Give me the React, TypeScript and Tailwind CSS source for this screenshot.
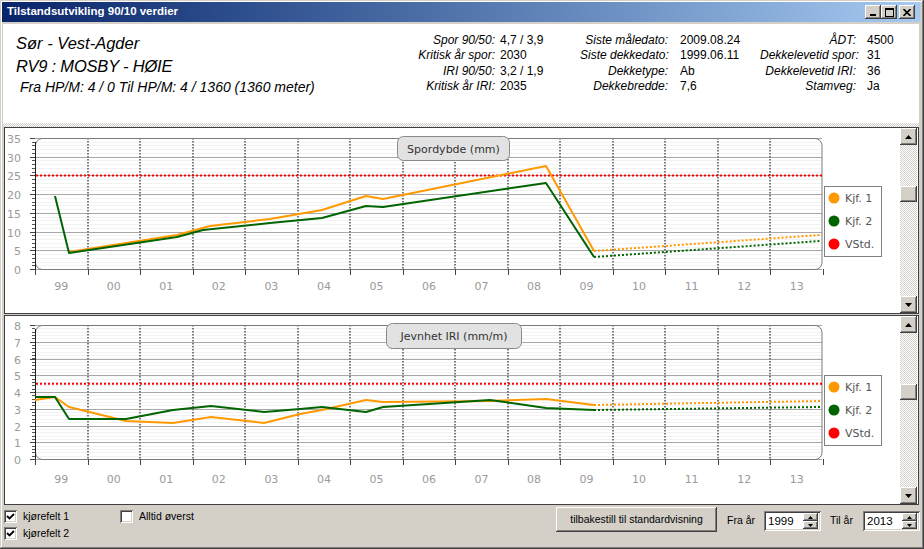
import React from "react";

type Pt = [number, number];

const bevel =
  "bg-[#d4d0c8] shadow-[inset_-1px_-1px_#404040,inset_1px_1px_#ffffff,inset_-2px_-2px_#808080,inset_2px_2px_#d4d0c8]";
const sunken =
  "bg-white shadow-[inset_1px_1px_#808080,inset_-1px_-1px_#ffffff,inset_2px_2px_#404040,inset_-2px_-2px_#d4d0c8]";
const hatch =
  "bg-[image:repeating-conic-gradient(#d4d0c8_0_25%,#ffffff_0_50%)] bg-[length:2px_2px]";

const ticks = Array.from({ length: 16 }, (_, k) => 35 + k * 52.53);
const years = ["99", "00", "01", "02", "03", "04", "05", "06", "07", "08", "09", "10", "11", "12", "13"];

const line = (p: Pt[]) => p.map(([x, y]) => `${x},${y}`).join(" ");

type ChartProps = {
  top: number;
  height: number;
  yTop: number;
  yZero: number;
  max: number;
  step: number;
  minor: number;
  vstd: number;
  title: string;
  box: [number, number, number, number];
  legendTop: number;
  labelY: number;
  orange: Pt[];
  orangeDot: Pt[];
  green: Pt[];
  greenDot: Pt[];
};

function Chart(c: ChartProps) {
  const unit = (c.yZero - c.yTop) / c.max;
  const majors: number[] = [];
  for (let v = 0; v <= c.max + 1e-6; v += c.step) majors.push(v);
  const minors: number[] = [];
  for (let v = 0; v <= c.max + 1e-6; v += c.minor) minors.push(v);
  const yv = (v: number) => Math.round(c.yZero - v * unit) + 0.5;
  const vy = c.yZero - c.vstd * unit;
  const [bx, by, bw, bh] = c.box;

  return (
    <svg
      width={895}
      height={c.height}
      viewBox={`5 ${c.top} 895 ${c.height}`}
      className="block"
      fontFamily="'DejaVu Sans', Verdana, sans-serif"
    >
      <rect x={5} y={c.top} width={895} height={c.height} fill="#ffffff" />
      {minors.map((v) => (
        <line key={`m${v}`} x1={35} x2={822} y1={yv(v)} y2={yv(v)} stroke="#f2f2f2" />
      ))}
      {majors.map((v) => (
        <line key={`M${v}`} x1={35} x2={822} y1={yv(v)} y2={yv(v)} stroke="#a8a8a8" />
      ))}
      {ticks.slice(1, 15).map((x) => (
        <line
          key={`v${x}`}
          x1={Math.round(x)}
          x2={Math.round(x)}
          y1={c.yTop}
          y2={c.yZero}
          stroke="#7a7a7a"
          strokeWidth={2}
          strokeDasharray="1.5 1.5"
        />
      ))}
      <rect
        x={35.5}
        y={c.yTop + 0.5}
        width={786.5}
        height={c.yZero - c.yTop}
        rx={7}
        fill="none"
        stroke="#7a7a7a"
      />
      <line x1={35.5} x2={35.5} y1={c.yTop + 4} y2={c.yZero + 6} stroke="#202020" />
      {minors.map((v) => (
        <line key={`t${v}`} x1={32} x2={35} y1={yv(v)} y2={yv(v)} stroke="#555555" />
      ))}
      {majors.map((v) => (
        <line key={`T${v}`} x1={30} x2={35} y1={yv(v)} y2={yv(v)} stroke="#444444" />
      ))}
      {ticks.map((x) => (
        <line
          key={`x${x}`}
          x1={Math.round(x) + 0.5}
          x2={Math.round(x) + 0.5}
          y1={c.yZero}
          y2={c.yZero + 6}
          stroke="#444444"
        />
      ))}
      {majors.map((v) => (
        <text key={`l${v}`} x={21} y={yv(v) + 4} fontSize={11} fill="#9a9a9a" textAnchor="end">
          {v}
        </text>
      ))}
      {years.map((y, k) => (
        <text
          key={y}
          x={(ticks[k] + ticks[k + 1]) / 2}
          y={c.labelY}
          fontSize={11}
          fill="#9a9a9a"
          textAnchor="middle"
        >
          {y}
        </text>
      ))}
      <line
        x1={36}
        x2={822}
        y1={vy}
        y2={vy}
        stroke="#ff0000"
        strokeWidth={2}
        strokeDasharray="2 2"
      />
      <polyline points={line(c.orangeDot)} fill="none" stroke="#ff9900" strokeWidth={2} strokeDasharray="2 2" />
      <polyline points={line(c.greenDot)} fill="none" stroke="#006400" strokeWidth={2} strokeDasharray="2 2" />
      <polyline points={line(c.orange)} fill="none" stroke="#ff9900" strokeWidth={2} strokeLinejoin="round" />
      <polyline points={line(c.green)} fill="none" stroke="#006400" strokeWidth={2} strokeLinejoin="round" />

      <rect x={bx + 0.5} y={by + 0.5} width={bw} height={bh} rx={6} fill="#e2e2e2" stroke="#8a8a8a" />
      <text x={bx + bw / 2 + 0.5} y={by + bh / 2 + 4.5} fontSize={11} fill="#333333" textAnchor="middle">
        {c.title}
      </text>

      <rect x={824.5} y={c.legendTop + 0.5} width={57} height={70} fill="#ffffff" stroke="#808080" />
      {[
        ["#ff9900", "Kjf. 1"],
        ["#006400", "Kjf. 2"],
        ["#ff0000", "VStd."],
      ].map(([col, t], i) => {
        const cy = c.legendTop + 12 + i * 23;
        return (
          <g key={t}>
            <circle cx={834} cy={cy} r={5.5} fill={col} />
            <text x={845} y={cy + 4} fontSize={11} fill="#555555">
              {t}
            </text>
          </g>
        );
      })}
    </svg>
  );
}

function Arrow({ down }: { down?: boolean }) {
  return (
    <svg width="7" height="4" viewBox="0 0 7 4">
      <polygon points={down ? "0,0 7,0 3.5,4" : "3.5,0 7,4 0,4"} fill="#000000" />
    </svg>
  );
}

function ScrollBar({ spacer }: { spacer: string }) {
  return (
    <div className="flex w-[17px] flex-col">
      <div className={`flex h-[17px] items-center justify-center ${bevel}`}>
        <Arrow />
      </div>
      <div className={`flex flex-1 flex-col ${hatch}`}>
        <div className={spacer} />
        <div className={`h-[16px] ${bevel}`} />
      </div>
      <div className={`flex h-[17px] items-center justify-center ${bevel}`}>
        <Arrow down />
      </div>
    </div>
  );
}

function CheckRow({ label, checked }: { label: string; checked?: boolean }) {
  return (
    <div className="flex h-[17px] items-center gap-[6px]">
      <div className={`flex h-[13px] w-[13px] items-center justify-center ${sunken}`}>
        {checked && (
          <svg width="9" height="9" viewBox="0 0 9 9">
            <polyline points="1,4 3.5,6.5 8,2" fill="none" stroke="#000000" strokeWidth="1.8" />
          </svg>
        )}
      </div>
      <span>{label}</span>
    </div>
  );
}

function Spin({ value }: { value: string }) {
  return (
    <div className={`flex h-[20px] w-[57px] items-center ${sunken}`}>
      <span className="flex-1 pl-[4px] pt-[2px] text-[11.5px]">{value}</span>
      <div className="mr-[3px] flex h-[16px] w-[15px] flex-col">
        <div className={`flex flex-1 items-center justify-center ${bevel}`}>
          <svg width="5" height="3" viewBox="0 0 5 3">
            <polygon points="2.5,0 5,3 0,3" fill="#000000" />
          </svg>
        </div>
        <div className={`flex flex-1 items-center justify-center ${bevel}`}>
          <svg width="5" height="3" viewBox="0 0 5 3">
            <polygon points="0,0 5,0 2.5,3" fill="#000000" />
          </svg>
        </div>
      </div>
    </div>
  );
}

const info: [string, string, string, string, string, string][] = [
  ["Spor 90/50:", "4,7 / 3,9", "Siste måledato:", "2009.08.24", "ÅDT:", "4500"],
  ["Kritisk år spor:", "2030", "Siste dekkedato:", "1999.06.11", "Dekkelevetid spor:", "31"],
  ["IRI 90/50:", "3,2 / 1,9", "Dekketype:", "Ab", "Dekkelevetid IRI:", "36"],
  ["Kritisk år IRI:", "2035", "Dekkebredde:", "7,6", "Stamveg:", "Ja"],
];

export default function App() {
  return (
    <div className="relative h-[549px] w-[924px] overflow-hidden bg-[#d4d0c8] font-['Liberation_Sans',Arial,sans-serif] text-black shadow-[inset_-1px_-1px_#404040,inset_1px_1px_#d4d0c8,inset_-2px_-2px_#808080,inset_2px_2px_#ffffff]">
      {/* title bar */}
      <div className="px-[2px] pt-[2px]">
        <div className="flex h-[20px] w-[918px] items-center bg-linear-to-r from-[#0a246a] to-[#a6caf0] pl-[5px] pr-[5px]">
          <span className="flex-1 text-[11.5px] font-bold text-white">Tilstandsutvikling 90/10 verdier</span>
          <div className={`flex h-[14px] w-[16px] items-end justify-center pb-[3px] ${bevel}`}>
            <div className="h-[2px] w-[6px] bg-black" />
          </div>
          <div className={`flex h-[14px] w-[16px] items-center justify-center ${bevel}`}>
            <div className="h-[9px] w-[9px] border border-t-2 border-black" />
          </div>
          <div className={`ml-[2px] flex h-[14px] w-[16px] items-center justify-center ${bevel}`}>
            <svg width="8" height="7" viewBox="0 0 8 7">
              <path d="M0.5 0 L7.5 7 M7.5 0 L0.5 7" stroke="#000000" strokeWidth="1.6" />
            </svg>
          </div>
        </div>
      </div>

      <div className="flex flex-col px-[3px] pt-[2px]">
        {/* header */}
        <div className="flex h-[99px] w-[916px] bg-white pl-[13px]">
          <div className="w-[384px] whitespace-nowrap pt-[8px] italic">
            <div className="text-[16.5px] leading-[22px]">Sør - Vest-Agder</div>
            <div className="text-[16.5px] leading-[24px] tracking-[-0.2px]">RV9 : MOSBY - HØIE</div>
            <div className="ml-[4px] text-[14px] leading-[18px]">
              Fra HP/M: 4 / 0 Til HP/M: 4 / 1360 (1360 meter)
            </div>
          </div>
          <div className="grid h-fit grid-cols-[95px_85px_88px_92px_96px_60px] whitespace-nowrap pt-[9px] text-[12px] leading-[15.4px]">
            {info.map((r) => (
              <React.Fragment key={r[0]}>
                <div className="text-right italic">{r[0]}</div>
                <div className="pl-[5px]">{r[1]}</div>
                <div className="text-right italic">{r[2]}</div>
                <div className="pl-[12px]">{r[3]}</div>
                <div className="text-right italic">{r[4]}</div>
                <div className="pl-[11px]">{r[5]}</div>
              </React.Fragment>
            ))}
          </div>
        </div>

        {/* splitter */}
        <div className={`h-[4px] w-[916px] ${hatch}`} />

        {/* chart 1 */}
        <div className="ml-[1px] flex h-[187px] w-[915px] border border-[#404040] bg-white">
          <Chart
            top={128}
            height={185}
            yTop={138}
            yZero={269}
            max={35}
            step={5}
            minor={1}
            vstd={25}
            title="Spordybde (mm)"
            box={[397, 136, 112, 24]}
            legendTop={186}
            labelY={290}
            orange={[
              [69, 252],
              [177, 235],
              [210, 226],
              [270, 219],
              [322, 210],
              [366, 196],
              [383, 199],
              [546, 166],
              [594, 251],
            ]}
            orangeDot={[
              [594, 251],
              [820, 235],
            ]}
            green={[
              [55, 196],
              [69, 253],
              [177, 237],
              [203, 230],
              [270, 223],
              [322, 218],
              [366, 206],
              [383, 207],
              [546, 183],
              [594, 257],
            ]}
            greenDot={[
              [594, 257],
              [820, 241],
            ]}
          />
          <ScrollBar spacer="h-[41px]" />
        </div>

        <div className="h-[1px]" />

        {/* chart 2 */}
        <div className="ml-[1px] flex h-[190px] w-[915px] border border-[#404040] bg-white">
          <Chart
            top={316}
            height={188}
            yTop={325}
            yZero={459}
            max={8}
            step={1}
            minor={0.2}
            vstd={4.5}
            title="Jevnhet IRI (mm/m)"
            box={[386, 323, 135, 25]}
            legendTop={375}
            labelY={483}
            orange={[
              [35, 400],
              [55, 397],
              [69, 407],
              [126, 421],
              [173, 423],
              [211, 417],
              [264, 423],
              [300, 414],
              [322, 410],
              [366, 400],
              [383, 402],
              [490, 401],
              [546, 399],
              [594, 405],
            ]}
            orangeDot={[
              [594, 405],
              [820, 401],
            ]}
            green={[
              [35, 397],
              [55, 397],
              [69, 419],
              [126, 419],
              [173, 410],
              [211, 406],
              [264, 412],
              [300, 409],
              [322, 407],
              [366, 412],
              [383, 407],
              [490, 400],
              [546, 408],
              [594, 410],
            ]}
            greenDot={[
              [594, 410],
              [820, 407],
            ]}
          />
          <ScrollBar spacer="h-[51px]" />
        </div>

        {/* bottom controls */}
        <div className="flex h-[44px] text-[10.5px]">
          <div className="flex w-[117px] flex-col pl-[1px] pt-[3px]">
            <CheckRow label="kjørefelt 1" checked />
            <CheckRow label="kjørefelt 2" checked />
          </div>
          <div className="w-[436px] pt-[3px]">
            <CheckRow label="Alltid øverst" />
          </div>
          <div
            className={`mt-[2px] flex h-[25px] w-[161px] items-center justify-center text-[10.5px] ${bevel}`}
          >
            tilbakestill til standardvisning
          </div>
          <div className="ml-[10px] mt-[6px] flex h-[20px] w-[37px] items-center">Fra år</div>
          <div className="mt-[6px]">
            <Spin value="1999" />
          </div>
          <div className="ml-[9px] mt-[6px] flex h-[20px] w-[33px] items-center">Til år</div>
          <div className="mt-[6px]">
            <Spin value="2013" />
          </div>
        </div>
      </div>
    </div>
  );
}
